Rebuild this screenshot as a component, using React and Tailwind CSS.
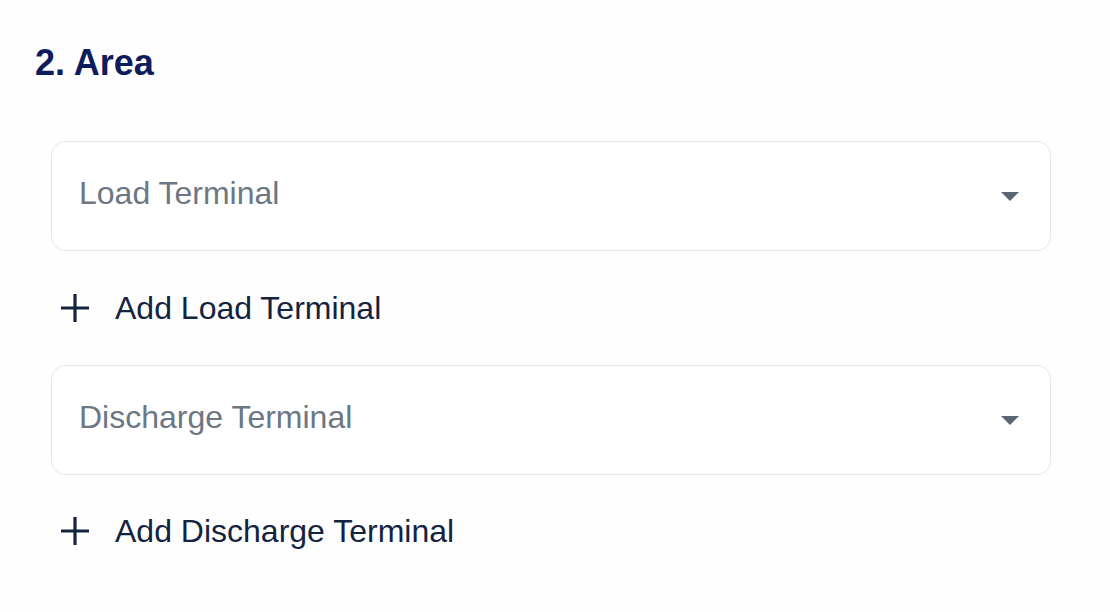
function Caret() {
  return (
    <svg width="18" height="9" viewBox="0 0 18 9" className="shrink-0">
      <path d="M0 0 H18 L9 9 Z" fill="#5b6673" />
    </svg>
  );
}

function Plus() {
  return (
    <svg width="28" height="28" viewBox="0 0 28 28" className="shrink-0">
      <path d="M14 1 V27 M1 14 H27" stroke="#14233f" strokeWidth="3.2" strokeLinecap="square" />
    </svg>
  );
}

function SelectBox({ label }) {
  return (
    <div className="ml-[16px] flex h-[110px] w-[1000px] items-center justify-between rounded-[14px] border-[1.5px] border-[#e3e6e9] bg-white pl-[27px] pr-[31px]">
      <span className="pb-[6px] text-[32px] leading-none text-[#6b7784]">{label}</span>
      <Caret />
    </div>
  );
}

function AddRow({ label }) {
  return (
    <button className="ml-[26px] flex h-[36px] items-center gap-[26px] text-left">
      <Plus />
      <span className="text-[32px] leading-[36px] text-[#14233f]">{label}</span>
    </button>
  );
}

export default function App() {
  return (
    <div
      className="h-[612px] w-[1110px] overflow-hidden bg-[#fefefe] pl-[35px] pt-[45px]"
      style={{ fontFamily: '"Liberation Sans", Arial, sans-serif' }}
    >
      <h2 className="text-[36px] font-bold leading-none text-[#0e1c5c]">2. Area</h2>

      <div className="mt-[60px]">
        <SelectBox label="Load Terminal" />
      </div>
      <div className="mt-[39px]">
        <AddRow label="Add Load Terminal" />
      </div>
      <div className="mt-[39px]">
        <SelectBox label="Discharge Terminal" />
      </div>
      <div className="mt-[38px]">
        <AddRow label="Add Discharge Terminal" />
      </div>
    </div>
  );
}
